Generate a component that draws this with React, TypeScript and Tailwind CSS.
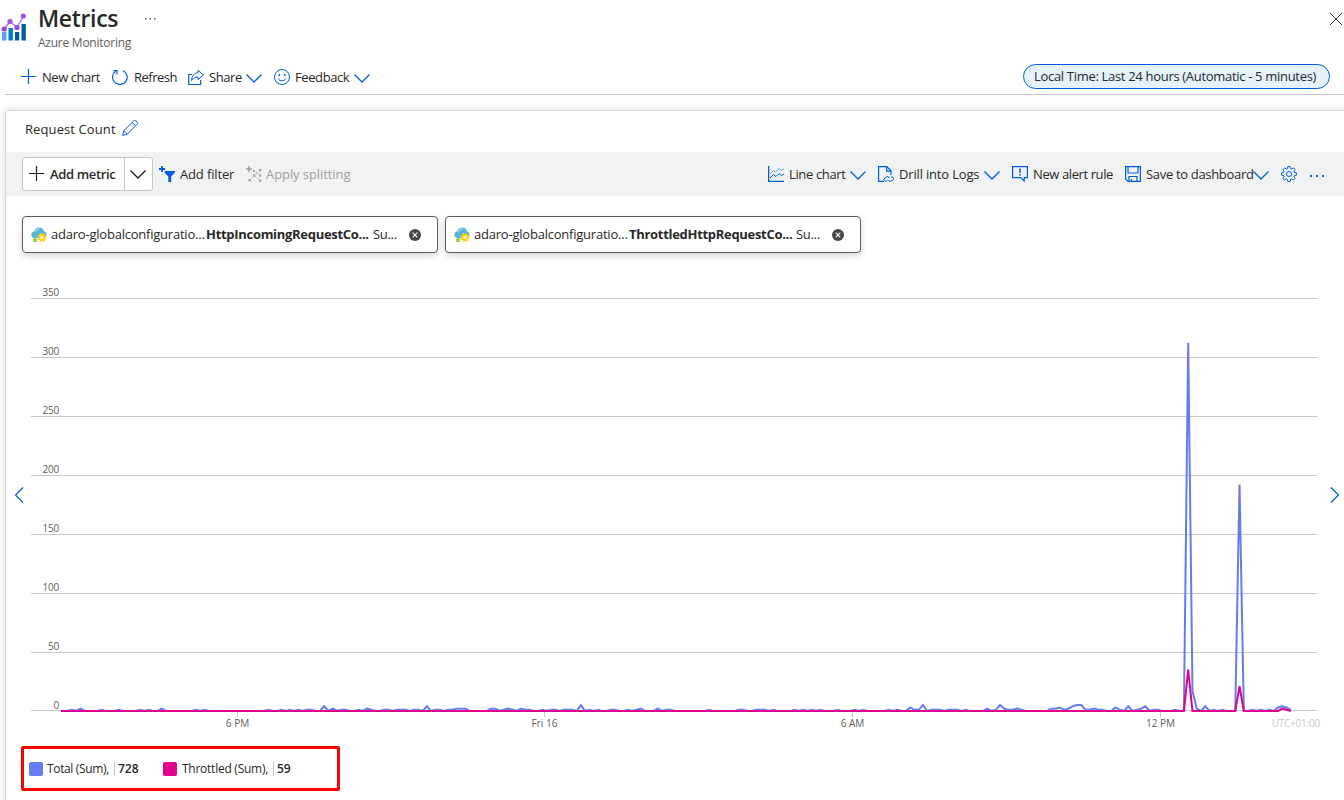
import type { ReactNode } from 'react';

const BLUE = '#015cda';

// Sparse samples: [index, value], every index that is left out is zero
const TOTAL_SAMPLES: [number, number][] = [
  [2, 1], [4, 2], [9, 1], [13, 1], [18, 1], [20, 1], [23, 2], [31, 1], [33, 1], [48, 1], [51, 1], [53, 1], [55, 1],
  [57, 1], [58, 1], [61, 4], [63, 2], [65, 1], [66, 1], [69, 1], [71, 2], [72, 1], [75, 1], [76, 1], [78, 1], [79, 1],
  [80, 1], [82, 1], [83, 1], [85, 4], [87, 1], [88, 1], [90, 1], [91, 1], [92, 2], [93, 2], [94, 2], [100, 2], [101, 2],
  [103, 1], [104, 2], [105, 1], [107, 2], [108, 1], [109, 1], [112, 1], [114, 1], [115, 1], [117, 1], [118, 1], [119, 1],
  [121, 5], [123, 1], [125, 1], [128, 1], [129, 1], [132, 1], [134, 1], [135, 2], [139, 2], [141, 1], [142, 1],
  [151, 1], [158, 1], [159, 1], [162, 1], [163, 1], [164, 1], [166, 1], [171, 1], [173, 1], [175, 1], [177, 1],
  [181, 1], [185, 1], [187, 1], [193, 1], [195, 1], [198, 3], [199, 1], [200, 1], [201, 5], [203, 1], [204, 1],
  [205, 1], [207, 1], [208, 1], [209, 1], [211, 1], [216, 2], [218, 1], [219, 5], [220, 2], [221, 1], [222, 1],
  [223, 2], [224, 1], [231, 2], [232, 2], [233, 3], [234, 1], [235, 2], [236, 4], [237, 5], [238, 5], [239, 1],
  [240, 1], [241, 2], [242, 1], [243, 1], [246, 3], [247, 1], [249, 4], [251, 1], [252, 2], [253, 4], [255, 1],
  [256, 1], [260, 1], [263, 312], [264, 17], [265, 2], [267, 4], [269, 1], [271, 1], [275, 192], [278, 1], [280, 1],
  [282, 1], [284, 3], [285, 4], [286, 3], [287, 1],
];

const THROTTLED_SAMPLES: [number, number][] = [[263, 35], [275, 21], [285, 2], [286, 1]];

const Y_TICKS = [350, 300, 250, 200, 150, 100, 50, 0];
const X_TICKS = [
  { x: 237, label: '6 PM' },
  { x: 544, label: 'Fri 16' },
  { x: 852, label: '6 AM' },
  { x: 1160, label: '12 PM' },
];

const BASE_Y = 431;

function linePoints(samples: [number, number][]) {
  const values = new Array(288).fill(0);
  samples.forEach(([i, v]) => { values[i] = v; });
  return `61,${BASE_Y} ` + values
    .map((v, i) => `${(63.35 + i * 4.277).toFixed(2)},${(BASE_Y - v * 1.18).toFixed(2)}`)
    .join(' ');
}

function Chevron({ className = '', color = BLUE }: { className?: string; color?: string }) {
  return (
    <svg width="16" height="16" viewBox="0 0 16 16" fill="none" stroke={color} strokeWidth="1.250" className={`shrink-0 ${className}`}>
      <path d="M0.500 4.500 8 12l7.500-7.500" />
    </svg>
  );
}

function Icon({ children, className = '', color = BLUE }: { children: ReactNode; className?: string; color?: string }) {
  return (
    <svg width="16" height="16" viewBox="0 0 16 16" fill="none" stroke={color} strokeWidth="1" className={`shrink-0 ${className}`}>
      {children}
    </svg>
  );
}

// Text with a fixed advance, so that the toolbar items keep their places
function Label({ children, className }: { children: ReactNode; className: string }) {
  return <span className={`shrink-0 whitespace-nowrap ${className}`}>{children}</span>;
}

function MetricsLogo() {
  return (
    <svg width="26" height="28" viewBox="0 0 26 28" className="shrink-0">
      <rect x="2" y="19" width="4.500" height="8.500" fill="#5ea0ef" />
      <rect x="8.500" y="15" width="4.400" height="12.500" fill="#0078d4" />
      <rect x="15" y="19" width="4.200" height="8.500" fill="#005ba1" />
      <rect x="21.500" y="11" width="4.300" height="16.500" fill="#005ba1" />
      <path d="M4.200 16 10 8.500l7 6L23.500 3" fill="none" stroke="#b77af4" strokeWidth="1.500" />
      <circle cx="4.200" cy="16" r="2.600" fill="#8a4bdc" />
      <circle cx="10" cy="8.500" r="2.600" fill="#9b57e8" />
      <circle cx="17" cy="14.500" r="2.600" fill="#8a4bdc" />
      <circle cx="23.300" cy="3" r="2.600" fill="#9b57e8" />
    </svg>
  );
}

function ResourceIcon() {
  return (
    <svg width="16" height="16" viewBox="0 0 16 16" className="shrink-0">
      <path d="M3.200 11A3.300 3.300 0 0 1 3 4.500C3.500 2.200 5.500.500 8 .500c2.600 0 4.500 1.600 5 3.800 1.500.4 2.500 1.700 2.500 3.200 0 2-1.500 3.500-3.500 3.500z" fill="#59b4d9" />
      <path d="M4 5C5 3 6.500 2 8.500 1.800" fill="none" stroke="#8cd0ea" strokeWidth="1.500" />
      <circle cx="10.900" cy="10.500" r="3.800" fill="none" stroke="#fcd116" strokeWidth="1.600" strokeDasharray="1.700 1.284" />
      <circle cx="10.900" cy="10.500" r="2.500" fill="#fff" stroke="#fcd116" strokeWidth="1.800" />
      <circle cx="4" cy="13.300" r="1.400" fill="#fff" stroke="#7fba00" strokeWidth="1.200" />
    </svg>
  );
}

function MetricPill({ metric }: { metric: string }) {
  return (
    <div className="flex h-[37px] w-[416px] items-center rounded-[4px] border border-[#5c5c5c] bg-white pl-2 text-[13px] shadow-[0_3px_7px_rgba(0,0,0,0.16)]">
      <ResourceIcon />
      <Label className="ml-1 w-[155px] tracking-[-0.22px]">adaro-globalconfiguratio...</Label>
      <Label className="w-[167px] font-bold tracking-[-0.3px]">{metric}</Label>
      <Label className="w-[36px] tracking-[-0.3px]">Su...</Label>
      <svg width="12" height="12" viewBox="0 0 12 12" className="shrink-0">
        <circle cx="6" cy="6" r="6" fill="#484644" />
        <path d="m3.700 3.700 4.600 4.600m0-4.600-4.600 4.600" stroke="#fff" strokeWidth="1.100" />
      </svg>
    </div>
  );
}

function Header() {
  return (
    <header className="flex h-[60px] justify-between">
      <div className="flex">
        <div className="w-[38px] pt-[13px]"><MetricsLogo /></div>
        <div>
          <div className="flex">
            <h1 className="h-[36px] w-[106px] text-[23px] leading-[36px] font-semibold tracking-[-0.35px]">Metrics</h1>
            <svg width="12" height="4" viewBox="0 0 12 4" className="mt-[17px]" fill="#605e5c">
              <rect x="1" y="1" width="1.500" height="1.500" />
              <rect x="5.500" y="1" width="1.500" height="1.500" />
              <rect x="10" y="1" width="1.500" height="1.500" />
            </svg>
          </div>
          <p className="text-[12px] leading-[14px] tracking-[-0.25px] text-[#605e5c]">Azure Monitoring</p>
        </div>
      </div>
      <svg width="15" height="14" viewBox="0 0 15 14" className="mt-3" stroke="#323130" strokeWidth="1">
        <path d="m1 1 12 12M13 1 1 13" />
      </svg>
    </header>
  );
}

function CommandBar() {
  return (
    <div className="ml-[5px] flex h-[35px] justify-between border-b border-[#c8c6c4] pl-4 text-[13px]">
      <div className="flex h-[34px] items-center">
        <Icon><path d="M7.500 0v15M0 7.500h15" strokeWidth="1.200" /></Icon>
        <Label className="mt-0.5 ml-[5px] w-[70px] tracking-[-0.45px]">New chart</Label>
        <Icon>
          <path d="M10.800 1.500A7.300 7.300 0 1 1 4 2" strokeWidth="1.200" />
          <path d="M1.300 1.500H5v3.700" strokeWidth="1.200" />
        </Icon>
        <Label className="mt-0.5 ml-[6px] w-[54px] tracking-[-0.5px]">Refresh</Label>
        <Icon>
          <path d="M4 5.500H.7v10h12v-4.500" strokeWidth="1.200" />
          <path d="M10 1.200 15.300 6 10 10.700V8C7 8 5 9 3.500 11.500 4 7 6 4 10 3.800z" />
        </Icon>
        <Label className="mt-0.5 ml-[5px] w-[37px] tracking-[-0.4px]">Share</Label>
        <Chevron className="mt-0.5" />
        <Icon className="ml-3">
          <circle cx="8" cy="8" r="7.500" />
          <circle cx="5.300" cy="6" r="1" fill={BLUE} stroke="none" />
          <circle cx="10.700" cy="6" r="1" fill={BLUE} stroke="none" />
          <path d="M4 9.500c1.800 3 6.200 3 8 0" />
        </Icon>
        <Label className="mt-0.5 ml-[5px] w-[59px] tracking-[-0.4px]">Feedback</Label>
        <Chevron className="mt-0.5" />
      </div>
      <div className="mt-1 mr-[14px] flex h-[25px] w-[307px] items-center rounded-full border border-[#015cda] bg-[#e5f1fb] pl-[10px]">
        <Label className="tracking-[-0.31px]">Local Time: Last 24 hours (Automatic - 5 minutes)</Label>
      </div>
    </div>
  );
}

function ChartToolbar() {
  return (
    <div className="flex h-[44px] items-center bg-[#f1f3f2] pl-4 text-[13px]">
      <button className="flex h-[34px] w-[131px] shrink-0 items-center rounded-[3px] border border-[#c8c6c4] bg-white">
        <Icon className="ml-1.5" color="#1b1a19"><path d="M7.500 0v15M0 7.500h15" strokeWidth="1.200" /></Icon>
        <Label className="mt-0.5 ml-[5px] w-[74px] text-left font-semibold tracking-[-0.35px]">Add metric</Label>
        <span className="flex h-full items-center border-l border-[#c8c6c4] pl-[5px]"><Chevron color="#1b1a19" /></span>
      </button>
      <Icon className="ml-1.5">
        <path d="M3 0v6M0 3h6" strokeWidth="1.800" />
        <path d="M5.500 5h10.500v1.300l-3.800 4.200V16H9.300v-5.500L5.500 6.500z" fill={BLUE} stroke="none" />
      </Icon>
      <Label className="mt-0.5 ml-[5px] w-[66px] tracking-[-0.15px]">Add filter</Label>
      <Icon color="#a19f9d">
        <path d="M3 0v6M0 3h6" strokeWidth="1.500" />
        <path d="m4 14 4-4.500 6 5M8 9.500l5.500-5M8 5l6 4.500" strokeDasharray="1.300 1" />
        <g fill="#a19f9d" stroke="none">
          <rect x="7" y="4" width="2" height="2" /><rect x="13" y="3" width="2.300" height="2.300" />
          <rect x="7" y="8.500" width="2.200" height="2.200" /><rect x="2.500" y="13" width="2.300" height="2.300" />
          <rect x="13" y="8.500" width="2.200" height="2.200" /><rect x="13" y="13.500" width="2.300" height="2.300" />
        </g>
      </Icon>
      <Label className="mt-0.5 ml-1 tracking-[-0.08px] text-[#a19f9d]">Apply splitting</Label>

      <div className="mr-[24px] ml-auto flex items-center">
        <Icon>
          <path d="M.6 0v15.400H16" strokeWidth="1.300" />
          <path d="m2 8 3.500-3.500 2 1.500L11 2.500l2 2L16 3" stroke="#50b0e0" />
          <path d="m2 12 3.500-3.500L8 10.500l3-3 2.500 2L16 8" />
        </Icon>
        <Label className="mt-0.5 ml-[5px] w-[61px] tracking-[-0.35px]">Line chart</Label>
        <Chevron className="mt-0.5" />
        <Icon className="ml-3">
          <path d="M6 15.400H.6V.6h8.200l4.200 4.200V9M8.600.8v4.400H13" strokeWidth="1.200" />
          <path d="m9.500 14.300-.9.700a1.700 1.700 0 0 1-1.700-3l2-1.200a1.700 1.700 0 0 1 2.400 1.200M13 11.200l1-.2a1.700 1.700 0 0 1 .9 3.100l-2 1.100a1.700 1.700 0 0 1-2.400-1.200" />
        </Icon>
        <Label className="mt-0.5 ml-[5px] w-[85px] tracking-[-0.17px]">Drill into Logs</Label>
        <Chevron className="mt-0.5" />
        <Icon className="ml-3">
          <path d="M.6.600h14.800v11h-3.200v3.400L8.800 11.600H.6z" strokeWidth="1.200" />
          <path d="M8 2.500v4.500M8 8.200v1.600" strokeWidth="1.500" />
        </Icon>
        <Label className="mt-0.5 ml-[5px] w-[92px] tracking-[-0.4px]">New alert rule</Label>
        <Icon>
          <path d="M.6.600h14.800v14.800H3L.6 13zM3 .600v6.400h10V.600M4 15v-4.500h8V15M6.500 15v-2" strokeWidth="1.200" />
        </Icon>
        <Label className="mt-0.5 ml-[5px] w-[107px] tracking-[-0.32px]">Save to dashboard</Label>
        <Chevron className="mt-0.5" />
        <Icon className="ml-3">
          <path d="m6.800.600 2.400 0 .4 2 1.100.5 1.700-1.200 1.700 1.700-1.200 1.700.5 1.100 2 .4v2.400l-2 .4-.5 1.100 1.200 1.700-1.700 1.700-1.700-1.200-1.100.5-.4 2H6.800l-.4-2-1.100-.5-1.700 1.200-1.700-1.700 1.200-1.700-.5-1.100-2-.4V6.800l2-.4.5-1.100-1.200-1.700 1.700-1.700 1.700 1.200 1.100-.5z" />
          <circle cx="8" cy="8" r="2.500" />
        </Icon>
        <svg width="16" height="4" viewBox="0 0 16 4" className="mt-1 ml-3" fill={BLUE}>
          <rect x="1" y="1" width="2" height="2" /><rect x="7" y="1" width="2" height="2" /><rect x="13" y="1" width="2" height="2" />
        </svg>
      </div>
    </div>
  );
}

function Chart() {
  return (
    <svg width="1344" height="466" viewBox="0 0 1344 466" className="-ml-1.5 block shrink-0" fontSize="10" fill="#605e5c">
      {Y_TICKS.map((tick) => {
        const y = tick === 0 ? 430.5 : 18.5 + (350 - tick) * 1.18;
        return (
          <g key={tick}>
            <path d={`M31 ${Math.floor(y) + 0.5}H1317`} stroke="#c8c8c8" />
            <text x="59" y={tick === 0 ? 429 : Math.floor(y) - 2} textAnchor="end" letterSpacing="-0.200">{tick}</text>
          </g>
        );
      })}
      {X_TICKS.map(({ x, label }) => (
        <g key={label}>
          <path d={`M${x + 0.5} 431v6`} stroke="#c8c8c8" />
          <text x={x + 0.5} y="447" textAnchor="middle">{label}</text>
        </g>
      ))}
      <text x="1320" y="447" textAnchor="end" fill="#c8c8c8" letterSpacing="-0.220">UTC+01:00</text>
      <polyline points={linePoints(TOTAL_SAMPLES)} fill="none" stroke="#637cef" strokeWidth="2" />
      <polyline points={linePoints(THROTTLED_SAMPLES)} fill="none" stroke="#e3008c" strokeWidth="2" />
      <path d="m23 207.500-7.500 7.500 7.500 7.500" fill="none" stroke={BLUE} strokeWidth="1.200" />
      <path d="m1331 207.500 7.500 7.500-7.500 7.500" fill="none" stroke={BLUE} strokeWidth="1.200" />
    </svg>
  );
}

function Legend() {
  return (
    <div className="ml-[15px] flex h-[45px] w-[319px] items-center rounded-[2px] border-[3px] border-[#ff0000] pl-[5px] text-[12px]">
      <span className="size-[14px] rounded-[2px] bg-[#637cef]" />
      <Label className="ml-[4px] w-[67px] tracking-[-0.35px]">Total (Sum),</Label>
      <Label className="w-[49px] border-l border-[#c8c6c4] pl-[3px] leading-[14px] font-semibold">728</Label>
      <span className="size-[14px] rounded-[2px] bg-[#e3008c]" />
      <Label className="ml-[5px] w-[91px] tracking-[-0.25px]">Throttled (Sum),</Label>
      <Label className="border-l border-[#c8c6c4] pl-[3px] leading-[14px] font-semibold">59</Label>
    </div>
  );
}

export default function App() {
  return (
    <div className="h-[800px] w-[1344px] overflow-hidden bg-white font-['Open_Sans','Noto_Sans',sans-serif] text-[#292827]">
      <Header />
      <CommandBar />
      <main className="mt-[15px] ml-[5px] h-[700px] w-[1345px] rounded-[3px] border border-[#d6d6d6] bg-white shadow-[0_0_8px_rgba(0,0,0,0.16)]">
        <div className="flex h-[41px] items-center pb-1 pl-[19px] text-[13px]">
          <Label className="w-[97px] tracking-[0.1px]">Request Count</Label>
          <Icon className="mb-1">
            <path d="m.6 15.400 1.200-4.700L11.700.900c.7-.6 1.600-.5 2.300.1l1 1c.6.700.6 1.600 0 2.300L5.300 14.200zM10.300 2.500l3.200 3.200M1.800 10.700l3.500 3.500" />
          </Icon>
        </div>
        <ChartToolbar />
        <div className="mt-5 ml-4 flex gap-[7px]">
          <MetricPill metric="HttpIncomingRequestCo..." />
          <MetricPill metric="ThrottledHttpRequestCo..." />
        </div>
        <div className="mt-[27px] h-[466px] overflow-hidden"><Chart /></div>
        <Legend />
      </main>
    </div>
  );
}
